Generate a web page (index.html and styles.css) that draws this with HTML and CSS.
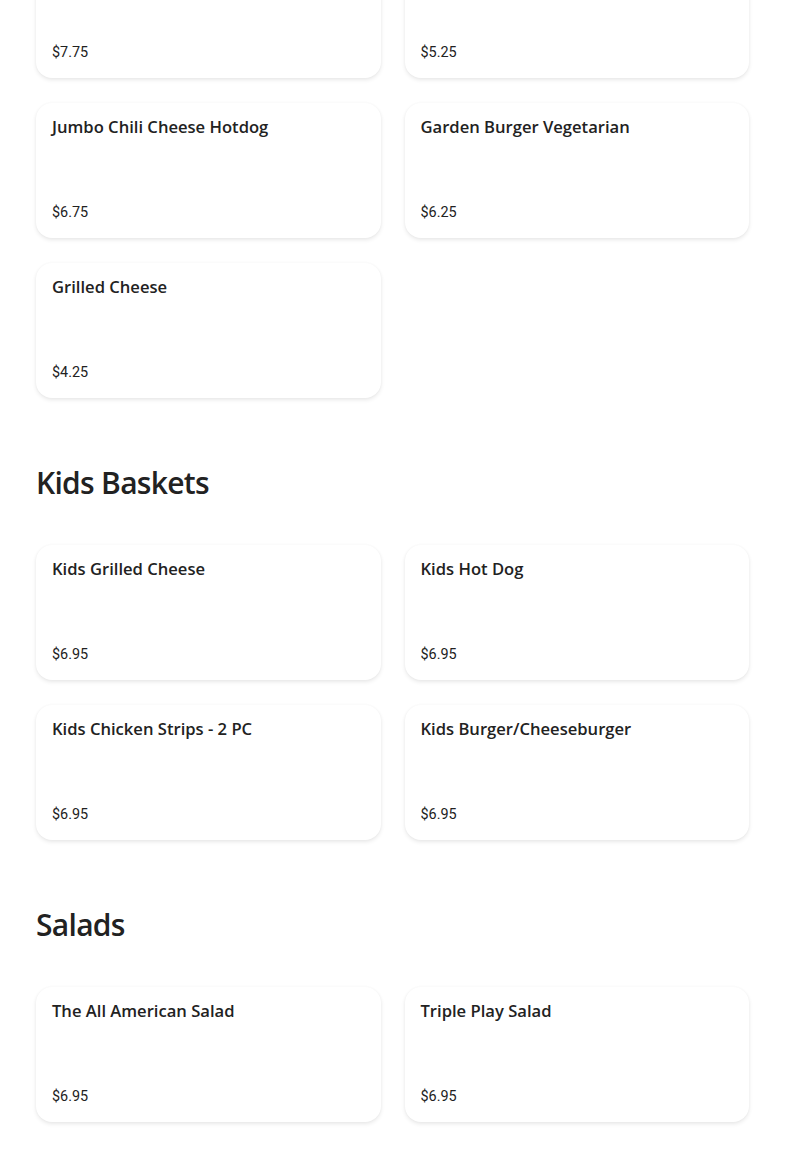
FILE: index.html
```html
<!DOCTYPE html>
<html lang="en">
<head>
<meta charset="utf-8">
<title>Menu</title>
<link rel="stylesheet" href="styles.css">
</head>
<body>
<main class="menu">
  <section class="section section-first">
    <div class="grid">
      <div class="card"><p class="price">$7.75</p></div>
      <div class="card"><p class="price">$5.25</p></div>
      <div class="card"><h3 class="name">Jumbo Chili Cheese Hotdog</h3><p class="price">$6.75</p></div>
      <div class="card"><h3 class="name">Garden Burger Vegetarian</h3><p class="price">$6.25</p></div>
      <div class="card"><h3 class="name">Grilled Cheese</h3><p class="price">$4.25</p></div>
    </div>
  </section>
  <section class="section">
    <h2 class="heading">Kids Baskets</h2>
    <div class="grid">
      <div class="card"><h3 class="name">Kids Grilled Cheese</h3><p class="price">$6.95</p></div>
      <div class="card"><h3 class="name">Kids Hot Dog</h3><p class="price">$6.95</p></div>
      <div class="card"><h3 class="name">Kids Chicken Strips - 2 PC</h3><p class="price">$6.95</p></div>
      <div class="card"><h3 class="name">Kids Burger/Cheeseburger</h3><p class="price">$6.95</p></div>
    </div>
  </section>
  <section class="section">
    <h2 class="heading">Salads</h2>
    <div class="grid">
      <div class="card"><h3 class="name">The All American Salad</h3><p class="price">$6.95</p></div>
      <div class="card"><h3 class="name">Triple Play Salad</h3><p class="price">$6.95</p></div>
    </div>
  </section>
</main>
</body>
</html>
```
FILE: styles.css
```css
* { box-sizing: border-box; }
html, body { margin: 0; padding: 0; background: #fff; }
body {
  font-family: "Open Sans", "Noto Sans", sans-serif;
  color: #222;
}
.menu {
  padding: 0 36px 60px;
}
.section-first {
  margin-top: -57px;
}
.section {
  display: flex;
  flex-direction: column;
}
.heading {
  margin: 0;
  padding-top: 21px;
  height: 147px;
  display: flex;
  align-items: center;
  font-size: 30px;
  font-weight: 600;
  letter-spacing: -0.7px;
  color: #222;
}
.grid {
  display: grid;
  grid-template-columns: 1fr 1fr;
  gap: 25px 24px;
}
.card {
  height: 135px;
  border-radius: 16px;
  background: #fff;
  box-shadow: 0 2px 4px rgba(0,0,0,0.09), 0 0 3px rgba(0,0,0,0.03);
  padding: 13px 16px 15px;
  display: flex;
  flex-direction: column;
}
.name {
  margin: 0;
  font-size: 16.6px;
  line-height: 22px;
  font-weight: 600;
  color: #222;
}
.price {
  margin: auto 0 0;
  font-family: Roboto, "Liberation Sans", sans-serif;
  font-size: 14.4px;
  line-height: 20px;
  color: #222;
}
```
